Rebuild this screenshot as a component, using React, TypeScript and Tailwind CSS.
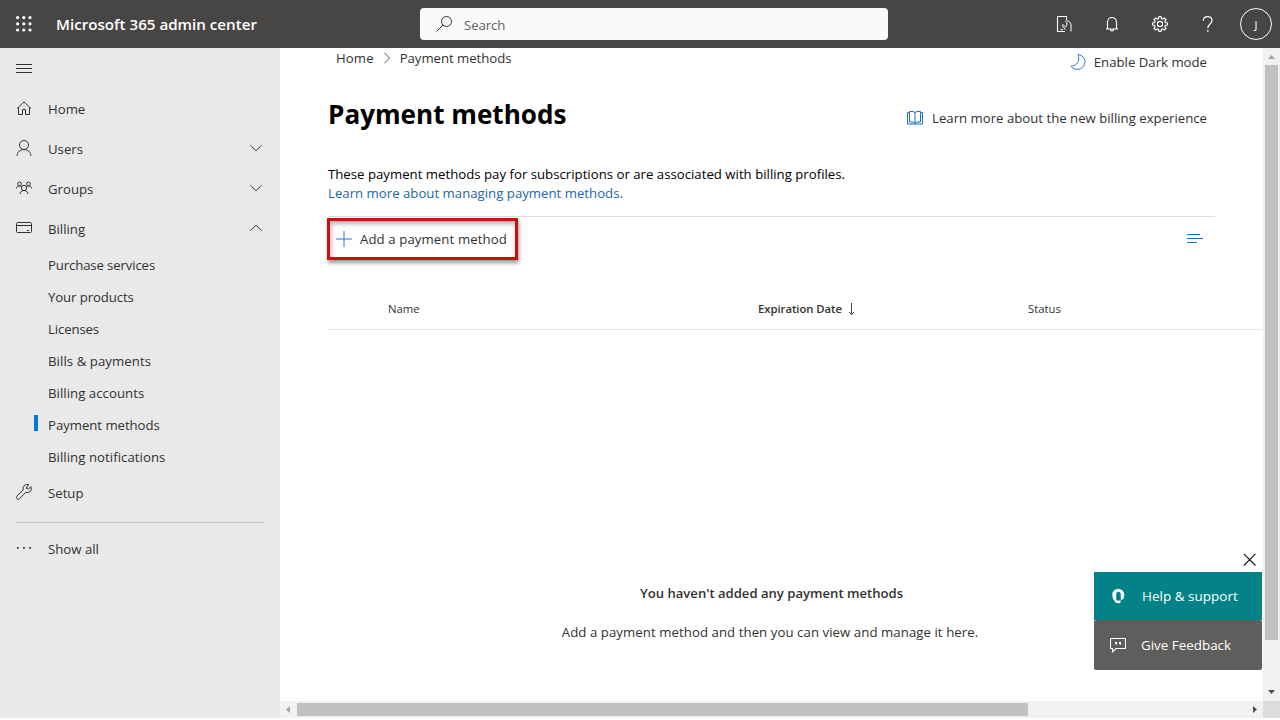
import type { ReactNode } from "react";

type IconProps = { children: ReactNode; w?: number; h?: number; className?: string };

function Icon({ children, w = 16, h = 16, className = "" }: IconProps) {
  return (
    <svg
      width={w}
      height={h}
      viewBox={`0 0 ${w} ${h}`}
      fill="none"
      stroke="currentColor"
      strokeWidth="1"
      className={`shrink-0 ${className}`}
    >
      {children}
    </svg>
  );
}

const HomeIcon = () => (
  <Icon>
    <path d="M1 8.500 8 2l7 6.500M2.500 7.200v7.300h4v-5h3v5h4V7.200" />
  </Icon>
);

const UserIcon = () => (
  <Icon>
    <circle cx="8" cy="5" r="4.500" />
    <path d="M1.100 16c0-4 3-6.500 6.900-6.500s6.900 2.500 6.900 6.500" />
  </Icon>
);

const GroupsIcon = () => (
  <Icon>
    <circle cx="3.500" cy="4" r="1.900" />
    <circle cx="12.500" cy="4" r="1.900" />
    <circle cx="8" cy="8" r="2.600" />
    <path d="M.5 8.500C.5 7 1.600 6 3.500 6c1 0 1.700.4 2.200 1M15.500 8.500c0-1.500-1.100-2.500-3-2.500-1 0-1.700.4-2.200 1M4.100 14c0-2.200 1.500-3.400 3.900-3.400s3.900 1.200 3.900 3.400" />
  </Icon>
);

const CardIcon = () => (
  <Icon>
    <rect x=".5" y="2.500" width="15" height="10" rx="1" />
    <path d="M.5 5.500h15M11 10.500h2" />
  </Icon>
);

const WrenchIcon = () => (
  <Icon>
    <path d="M14.900 2.700 12.600 5l-1.900-.3-.2-1.800L12.800.8A4 4 0 0 0 7.300 5.800L.9 12.200a1.700 1.700 0 0 0 0 2.500 1.700 1.700 0 0 0 2.500 0l6.500-6.400a4 4 0 0 0 5-5.600Z" />
  </Icon>
);

const DotsIcon = () => (
  <Icon>
    <path d="M1 7h1.700v1.700H1zM7.100 7h1.700v1.700H7.100zM13.200 7h1.700v1.700h-1.700z" fill="currentColor" stroke="none" />
  </Icon>
);

function Chevron({ up = false }: { up?: boolean }) {
  return (
    <Icon w={12} h={8}>
      <path d={up ? "M.4 6.700 6 1.200l5.600 5.500" : "M.4 1.200 6 6.700l5.600-5.500"} />
    </Icon>
  );
}

function NavRow({ icon, label, chevron }: { icon: ReactNode; label: string; chevron?: "up" | "down" }) {
  return (
    <a className="flex h-10 items-center pr-[18px] pl-4">
      {icon}
      <span className="ml-4 flex-1 pt-1">{label}</span>
      {chevron && <Chevron up={chevron === "up"} />}
    </a>
  );
}

const billing: [string, string][] = [
  ["Purchase services", "tracking-[-0.13px]"],
  ["Your products", "tracking-[-0.1px]"],
  ["Licenses", "tracking-[-0.12px]"],
  ["Bills & payments", "tracking-[0.07px]"],
  ["Billing accounts", "tracking-[0.04px]"],
  ["Payment methods", "tracking-[-0.04px]"],
  ["Billing notifications", "tracking-[0.05px]"],
];

function Sidebar() {
  return (
    <nav className="w-[280px] shrink-0 bg-[#e9e9e9] text-[#323130]">
      <div className="flex h-10 items-center pl-4">
        <Icon>
          <path d="M0 4.500h16M0 8.500h16M0 12.500h16" />
        </Icon>
      </div>
      <NavRow icon={<HomeIcon />} label="Home" />
      <NavRow icon={<UserIcon />} label="Users" chevron="down" />
      <NavRow icon={<GroupsIcon />} label="Groups" chevron="down" />
      <NavRow icon={<CardIcon />} label="Billing" chevron="up" />
      {billing.map(([label, tracking]) => (
        <a key={label} className="flex h-8 items-center pl-[34px]">
          <span className={`mb-0.5 h-4 w-1 ${label === "Payment methods" ? "bg-[#0078d4]" : ""}`} />
          <span className={`ml-2.5 pt-1 ${tracking}`}>{label}</span>
        </a>
      ))}
      <NavRow icon={<WrenchIcon />} label="Setup" />
      <hr className="mx-4 mt-2.5 mb-[5px] border-[#c8c6c4]" />
      <NavRow icon={<DotsIcon />} label="Show all" />
    </nav>
  );
}

function Header() {
  return (
    <header className="flex h-12 shrink-0 items-center bg-[#484644] text-white">
      <Icon className="ml-4">
        {[1.6, 7.8, 14].map((y) =>
          [1.6, 7.8, 14].map((x) => <circle key={`${x}-${y}`} cx={x} cy={y} r="1.600" fill="currentColor" stroke="none" />)
        )}
      </Icon>
      <span className="ml-6 w-[364px] pt-px text-[15.150px] font-semibold">Microsoft 365 admin center</span>
      <div className="flex h-8 w-[468px] items-center rounded bg-[#fafafa] pl-4">
        <Icon className="text-[#323130]">
          <circle cx="10.500" cy="5.500" r="5" />
          <path d="M7 9 .4 15.600" />
        </Icon>
        <span className="ml-3 pt-[3px] tracking-[-0.1px] text-[#605e5c]">Search</span>
      </div>
      <div className="ml-auto flex items-center pr-2">
        <Icon>
          <path d="M10.500 4v-3.500h-9v15H9" strokeWidth="1.100" />
          <path d="M4.500 13.500H7M9.500 11 7.300 8.900c-.6-.6-1.200.1-.8.8l2.800 4M9.500 11l1.300-1.800V6.500L9.300 5.200M10.500 4.500c2.500.5 4.500 2 4.500 4.500v6.500" />
        </Icon>
        <Icon className="ml-8">
          <path d="M3.500 12.500V6a4.500 4.500 0 0 1 9 0v6.500M2 13h12M6.300 13.300a1.700 1.700 0 0 0 3.400 0" strokeWidth="1.150" />
        </Icon>
        <Icon className="ml-8">
          <path d="M6.900.6h2.200l.4 2 1.200.5 1.700-1.100 1.600 1.600-1.100 1.700.5 1.200 2 .4v2.200l-2 .4-.5 1.200 1.100 1.700-1.600 1.600-1.700-1.100-1.200.5-.4 2H6.900l-.4-2-1.200-.5L3.600 14 2 12.400l1.100-1.700-.5-1.200-2-.4V6.900l2-.4.5-1.200L2 3.600 3.600 2l1.700 1.100 1.200-.5Z" strokeWidth="1.200" />
          <circle cx="8" cy="8" r="2.600" strokeWidth="1.200" />
        </Icon>
        <Icon className="ml-8">
          <path d="M3.300 4.800C3.300 2.200 5.200.6 7.700.6s4.300 1.600 4.300 3.900c0 3.400-4.200 3.600-4.200 7.700" strokeWidth="1.200" />
          <path d="M7.100 14.300h1.400v1.400H7.100z" fill="currentColor" stroke="none" />
        </Icon>
        <span className="ml-6 flex h-8 w-8 items-center justify-center rounded-full border border-white pt-0.5 text-[11px]">J</span>
      </div>
    </header>
  );
}

function Content() {
  return (
    <main className="relative min-w-0 flex-1 overflow-hidden bg-white pl-12 text-[#323130]">
      <div className="flex h-5 items-center pl-2">
        <span className="pt-0.5 tracking-[0.1px]">Home</span>
        <Icon w={6} h={12} className="mx-2.5 text-[#605e5c]">
          <path d="m.5.7 5 5.300-5 5.300" />
        </Icon>
        <span className="pt-0.5 tracking-[-0.04px]">Payment methods</span>
        <span className="mt-2 mr-14 ml-auto flex items-center">
          <Icon className="mr-2 text-[#2b6cc4]">
            <path d="M8.300.6c3.700.6 6.600 3.300 6.600 7.200 0 4.200-3.300 7.600-7.600 7.600-2.800 0-5-1.200-6.300-3.200 4.800-.3 7.700-3.400 7.700-7.400 0-1.600-.2-3-.4-4.200Z" />
          </Icon>
          <span className="pt-0.5">Enable Dark mode</span>
        </span>
      </div>
      <div className="mt-7 mr-14 flex h-9 items-center justify-between">
        <h1 className="pt-0.5 text-[26.100px] font-bold text-black">Payment methods</h1>
        <span className="mt-2 flex items-center">
          <Icon className="mr-[9px] text-[#1f6cbd]">
            <path d="M2.500 2.500v-1H6L8 2.500l2-1h3.500v1M8 2.500v11M2.500 2.500v9.500H6l2 1.500 2-1.500h3.500V2.500M2.500 2.500h-2v11.500h15V2.500h-2" />
          </Icon>
          <span className="pt-0.5">Learn more about the new billing experience</span>
        </span>
      </div>
      <p className="mt-[33px] leading-[19px] tracking-[0.01px] text-black">
        These payment methods pay for subscriptions or are associated with billing profiles.
        <br />
        <a className="text-[#2266a8]">Learn more about managing payment methods.</a>
      </p>
      <div className="mt-[13px] mr-12 flex h-12 items-start justify-between border-t border-[#dcdcdc] pr-3">
        <button className="mt-px -ml-px flex h-[42px] w-[191px] items-center border-[3px] border-[#c8100f] pl-[6px] shadow-[1px_3px_4px_rgba(0,0,0,0.4),inset_1px_3px_4px_rgba(0,0,0,0.3)]">
          <Icon className="text-[#2f76d2]">
            <path d="M8 0v16M0 8h16" />
          </Icon>
          <span className="ml-2 pt-0.5 tracking-[0.1px]">Add a payment method</span>
        </button>
        <Icon className="mt-[13px] text-[#1f6cb0]">
          <path d="M0 4.500h13M0 8.500h16M0 12.500h10" />
        </Icon>
      </div>
      <div className="mt-6 flex h-[42px] items-center border-b border-[#e6e6e6] pt-0.5 text-[11.300px]">
        <span className="ml-[60px] w-[370px]">Name</span>
        <span className="flex w-[270px] items-center font-semibold tracking-[-0.04px]">
          Expiration Date
          <Icon w={8} h={14} className="mb-0.5 ml-[5px]">
            <path d="M4.500 1v11.500M2 10l2.500 2.500L7 10" strokeWidth=".9" />
          </Icon>
        </span>
        <span>Status</span>
      </div>
      <div className="-ml-12 flex flex-col items-center pt-[253px]">
        <p className="text-[13.100px] leading-5 font-semibold">You haven't added any payment methods</p>
        <p className="mt-[19px] mr-[3px] leading-5 tracking-[0.07px]">Add a payment method and then you can view and manage it here.</p>
      </div>
      <div className="absolute right-px bottom-[31px] w-[168px] text-white">
        <Icon w={14} h={14} className="mb-[5px] ml-[149px] text-[#201f1e]">
          <path d="m.8.8 11.700 11.700M12.500.8.8 12.500" strokeWidth="1.200" />
        </Icon>
        <button className="flex h-12 w-full items-center bg-[#038387] pl-4 text-[13.500px] font-medium">
          <Icon>
            <path
              d="M2.300 6.800C2.300 3.200 4.800 1 8.300 1s6 2.300 6 5.800c0 2.200-.7 3.900-2 5h-1.500V6.500C10.800 4.600 10 3.700 8.500 3.700S6.200 4.600 6.200 6.500v5.300c.3.600.8.8 1.600.8h2.900v1.700c-.5.600-1.300.9-2.200.9-2.200 0-3.800-1.100-4.300-3C2.900 11 2.300 9.200 2.300 6.800Z"
              fill="currentColor"
              stroke="none"
            />
          </Icon>
          <span className="ml-4">Help &amp; support</span>
        </button>
        <button className="flex h-[50px] w-full items-center rounded-xs bg-[#605e5c] pl-4 text-[13.400px] font-medium">
          <Icon>
            <path d="M.5 1.500h15v10H6L2.500 15v-3.500h-2Z" strokeWidth="1.100" />
            <path d="M5 5h2v2.200L5.800 8.300V7H5zM9 5h2v2.200L9.800 8.300V7H9z" fill="currentColor" stroke="none" />
          </Icon>
          <span className="ml-[15px]">Give Feedback</span>
        </button>
      </div>
    </main>
  );
}

export default function App() {
  return (
    <div className="flex h-[718px] w-[1280px] flex-col overflow-hidden bg-white font-['Open_Sans',sans-serif] text-[13.200px]">
      <Header />
      <div className="flex min-h-0 flex-1">
        <Sidebar />
        <div className="flex min-w-0 flex-1 flex-col">
          <div className="flex min-h-0 flex-1">
            <Content />
            <div className="flex w-[17px] flex-col items-center bg-[#f1f1f1]">
              <Icon w={17} h={17} className="text-[#a3a3a3]">
                <path d="m5 11 3.500-4 3.500 4z" fill="currentColor" stroke="none" />
              </Icon>
              <div className="h-[575px] w-[13px] bg-[#c1c1c1]" />
              <Icon w={17} h={17} className="mt-auto text-[#505050]">
                <path d="m5 6 3.500 4L12 6z" fill="currentColor" stroke="none" />
              </Icon>
            </div>
          </div>
          <div className="flex h-[17px] items-center bg-[#f1f1f1]">
            <Icon w={17} h={17} className="text-[#a3a3a3]">
              <path d="m10 5-4 3.500 4 3.500z" fill="currentColor" stroke="none" />
            </Icon>
            <div className="h-[13px] w-[731px] bg-[#c1c1c1]" />
            <Icon w={17} h={17} className="ml-auto text-[#505050]">
              <path d="m7 5 4 3.500L7 12z" fill="currentColor" stroke="none" />
            </Icon>
            <div className="h-[17px] w-[17px] bg-[#dcdcdc]" />
          </div>
        </div>
      </div>
    </div>
  );
}
